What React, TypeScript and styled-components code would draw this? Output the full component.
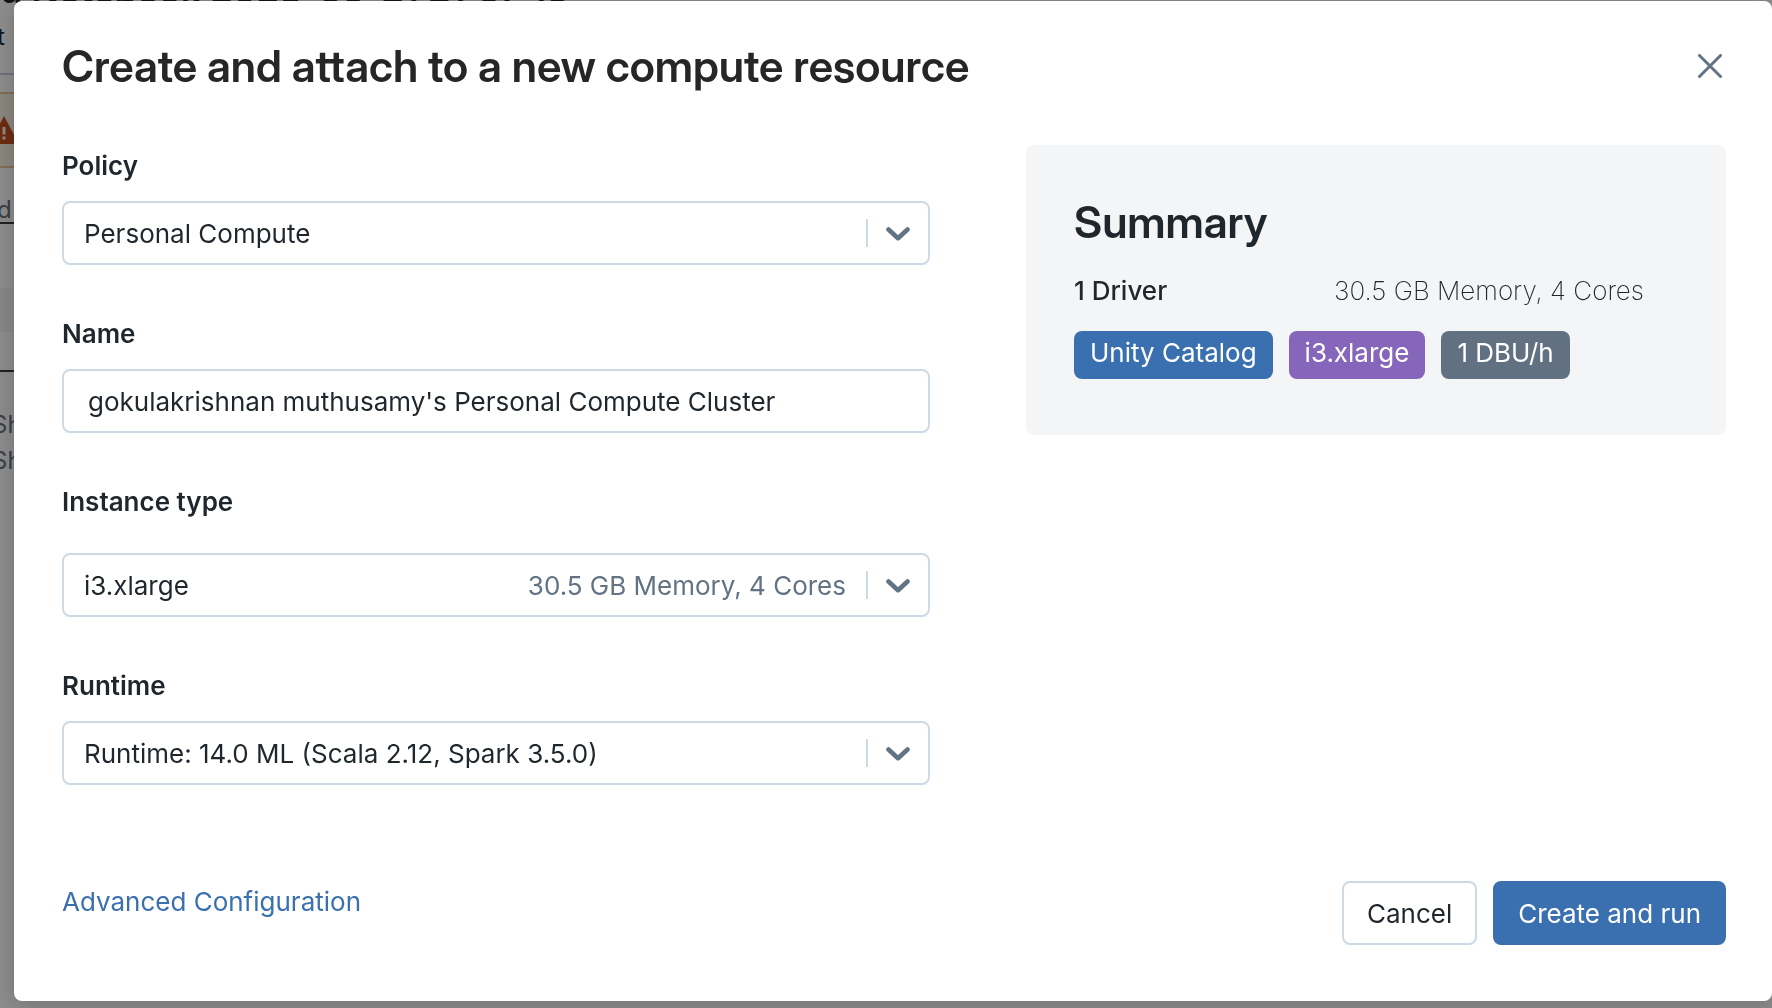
import styled, { createGlobalStyle } from "styled-components";
import type { ReactNode } from "react";

const color = {
  text: "#1f272d",
  title: "#262626",
  border: "#cdd9e5",
  muted: "#627384",
  primary: "#3b70b0",
  purple: "#8566ba",
  slate: "#627182",
  panel: "#f3f5f7",
};

const GlobalStyle = createGlobalStyle`
  *, *::before, *::after { box-sizing: border-box; }
  html, body, #root { height: 100%; }
  body {
    margin: 0;
    overflow: hidden;
    background: #ffffff;
    color: ${color.text};
    font: 400 26px/40px Inter, "Noto Sans", sans-serif;
  }
  h1, h2, p, dl, dt, dd { margin: 0; }
  button, input, select { font: inherit; color: inherit; }
`;

const Workspace = styled.div`
  height: 100%;
  overflow: hidden;
  display: flex;
  flex-direction: column;
  color: #6b747c;
  font-size: 24px;
  line-height: 36px;
  white-space: nowrap;
`;

const NotebookTitle = styled.div`
  margin-top: -40px;
  height: 53px;
  font-size: 36px;
  line-height: 60px;
  font-weight: 600;
  color: ${color.text};
`;

const MenuBar = styled.div`
  height: 62px;
  padding-top: 6px;
  border-bottom: 2px solid #c5cfda;
  color: ${color.text};
  text-indent: -3px;
`;

const Notice = styled.div`
  margin-top: 17px;
  height: 76px;
  padding-top: 22px;
  border-top: 2px solid #efc58f;
  border-bottom: 2px solid #efc58f;
  background: #fbf5e6;
`;

const CellMeta = styled.div`
  height: 56px;
  padding-top: 24px;
  border-bottom: 2px solid #3c3c3c;
  text-indent: -3px;
`;

const Cell = styled.div`
  height: 148px;
  padding-top: 64px;
  border-bottom: 2px solid #3c3c3c;
`;

const CellBand = styled.div`
  height: 44px;
  background: #f6f6f6;
`;

const Hints = styled.div`
  padding-top: 35px;
  text-indent: -8px;
`;

const Backdrop = styled.div`
  position: fixed;
  inset: 0;
  display: flex;
  padding: 1px 0 7px 14px;
  background: rgba(0, 0, 0, 0.45);
`;

const Dialog = styled.section`
  flex: 1;
  display: flex;
  flex-direction: column;
  padding: 40px 46px 56px 48px;
  border-radius: 8px;
  background: #ffffff;
  box-shadow: 0 4px 24px rgba(0, 0, 0, 0.2);
`;

const DialogHeader = styled.header`
  display: flex;
  align-items: center;
  justify-content: space-between;
  height: 50px;
`;

const Heading = styled.h1`
  font-family: "Inter Display", Inter, "Noto Sans", sans-serif;
  font-size: 44px;
  line-height: 50px;
  font-weight: 600;
  font-variant-ligatures: none;
  color: ${color.title};
`;

const CloseButton = styled.button`
  display: flex;
  padding: 4px;
  border: 0;
  background: none;
  color: ${color.muted};
`;

const Columns = styled.div`
  flex: 1;
  display: grid;
  grid-template-columns: 868fr 700fr;
  gap: 96px;
  align-items: start;
  padding-top: 54px;
`;

const Form = styled.form`
  display: flex;
  flex-direction: column;
  gap: 48px;
`;

const Field = styled.div<{ $gap?: number }>`
  display: flex;
  flex-direction: column;
  gap: ${(p) => p.$gap ?? 14}px;
`;

const Label = styled.label`
  line-height: 42px;
  font-weight: 600;
`;

const Control = styled.div`
  display: grid;
  grid-template-columns: minmax(0, 1fr) auto 62px;
  align-items: center;
  height: 64px;
  border: 2px solid ${color.border};
  border-radius: 8px;
  background: #ffffff;
`;

const Select = styled.select`
  grid-area: 1 / 1 / 2 / 4;
  width: 100%;
  height: 60px;
  padding: 2px 64px 0 20px;
  border: 0;
  border-radius: 6px;
  background: transparent;
  appearance: none;
`;

const SelectHint = styled.span`
  grid-area: 1 / 2;
  padding: 2px 20px 0 0;
  color: ${color.muted};
  pointer-events: none;
`;

const Chevron = styled.span`
  grid-area: 1 / 3;
  display: flex;
  justify-content: center;
  align-items: center;
  height: 28px;
  padding-top: 2px;
  border-left: 2px solid ${color.border};
  color: ${color.muted};
  pointer-events: none;
`;

const TextInput = styled.input`
  height: 64px;
  padding: 0 24px;
  border: 2px solid ${color.border};
  border-radius: 8px;
  background: #ffffff;
`;

const Summary = styled.aside`
  display: flex;
  flex-direction: column;
  padding: 52px 48px 56px;
  border-radius: 8px;
  background: ${color.panel};
`;

const SummaryTitle = styled.h2`
  font-family: "Inter Display", Inter, "Noto Sans", sans-serif;
  font-size: 44px;
  line-height: 50px;
  font-weight: 600;
`;

const Specs = styled.dl`
  display: grid;
  grid-template-columns: 260px 1fr;
  padding: 24px 0 20px;
`;

const SpecName = styled.dt`
  font-weight: 500;
`;

const SpecValue = styled.dd`
  font-weight: 200;
`;

const Tags = styled.div`
  display: flex;
  gap: 16px;
`;

const Tag = styled.span<{ $fill: string }>`
  height: 48px;
  padding: 2px 16px 6px;
  border-radius: 8px;
  background: ${(p) => p.$fill};
  color: #ffffff;
`;

const DialogFooter = styled.footer`
  display: flex;
  align-items: flex-start;
  gap: 16px;
`;

const AdvancedLink = styled.a`
  margin-right: auto;
  line-height: 42px;
  color: ${color.primary};
  text-decoration: none;
`;

const Button = styled.button<{ $primary?: boolean }>`
  height: 64px;
  padding: 2px 23px 0;
  border: 2px solid ${(p) => (p.$primary ? color.primary : color.border)};
  border-radius: 8px;
  background: ${(p) => (p.$primary ? color.primary : "#ffffff")};
  color: ${(p) => (p.$primary ? "#ffffff" : color.text)};
`;

const ChevronIcon = () => (
  <svg width="24" height="14" viewBox="0 0 24 14" fill="none" aria-hidden="true">
    <path d="M2.5 2.5 12 11.2 21.5 2.5" stroke="currentColor" strokeWidth="4.6" strokeLinecap="round" strokeLinejoin="round" />
  </svg>
);

const CloseIcon = () => (
  <svg width="24" height="24" viewBox="0 0 24 24" fill="none" aria-hidden="true">
    <path d="M1.5 1.5 22.5 22.5M22.5 1.5 1.5 22.5" stroke="currentColor" strokeWidth="3" strokeLinecap="round" />
  </svg>
);

const WarningIcon = () => (
  <svg width="28" height="30" viewBox="0 0 28 30" aria-hidden="true">
    <path d="M4 0 19 28H-11Z" fill="#c8501e" />
    <path d="M2.5 11H5.5V18.5H2.5ZM2.5 20.5H5.5V23.5H2.5Z" fill="#fbf5e6" />
  </svg>
);

function SelectField(props: { id: string; label: string; value: string; hint?: ReactNode; gap?: number }) {
  return (
    <Field $gap={props.gap}>
      <Label htmlFor={props.id}>{props.label}</Label>
      <Control>
        <Select id={props.id} defaultValue={props.value}>
          <option>{props.value}</option>
        </Select>
        {props.hint && <SelectHint>{props.hint}</SelectHint>}
        <Chevron>
          <ChevronIcon />
        </Chevron>
      </Control>
    </Field>
  );
}

export default function App() {
  return (
    <>
      <GlobalStyle />
      <Workspace aria-hidden="true">
        <NotebookTitle>d Notebook 2023-09-21 21:07:19</NotebookTitle>
        <MenuBar>t</MenuBar>
        <Notice>
          <WarningIcon />
        </Notice>
        <CellMeta>d</CellMeta>
        <Cell>
          <CellBand />
        </Cell>
        <Hints>
          <p>Sh</p>
          <p>Sh</p>
        </Hints>
      </Workspace>
      <Backdrop>
        <Dialog role="dialog" aria-modal="true" aria-labelledby="dialog-title">
          <DialogHeader>
            <Heading id="dialog-title">Create and attach to a new compute resource</Heading>
            <CloseButton type="button" aria-label="Close">
              <CloseIcon />
            </CloseButton>
          </DialogHeader>
          <Columns>
            <Form>
              <SelectField id="policy" label="Policy" value="Personal Compute" />
              <Field>
                <Label htmlFor="name">Name</Label>
                <TextInput id="name" type="text" defaultValue="gokulakrishnan muthusamy's Personal Compute Cluster" />
              </Field>
              <SelectField id="instance" label="Instance type" value="i3.xlarge" hint="30.5 GB Memory, 4 Cores" gap={30} />
              <SelectField id="runtime" label="Runtime" value="Runtime: 14.0 ML (Scala 2.12, Spark 3.5.0)" />
            </Form>
            <Summary aria-labelledby="summary-title">
              <SummaryTitle id="summary-title">Summary</SummaryTitle>
              <Specs>
                <SpecName>1 Driver</SpecName>
                <SpecValue>30.5 GB Memory, 4 Cores</SpecValue>
              </Specs>
              <Tags>
                <Tag $fill={color.primary}>Unity Catalog</Tag>
                <Tag $fill={color.purple}>i3.xlarge</Tag>
                <Tag $fill={color.slate}>1 DBU/h</Tag>
              </Tags>
            </Summary>
          </Columns>
          <DialogFooter>
            <AdvancedLink href="#advanced">Advanced Configuration</AdvancedLink>
            <Button type="button">Cancel</Button>
            <Button type="button" $primary>
              Create and run
            </Button>
          </DialogFooter>
        </Dialog>
      </Backdrop>
    </>
  );
}
